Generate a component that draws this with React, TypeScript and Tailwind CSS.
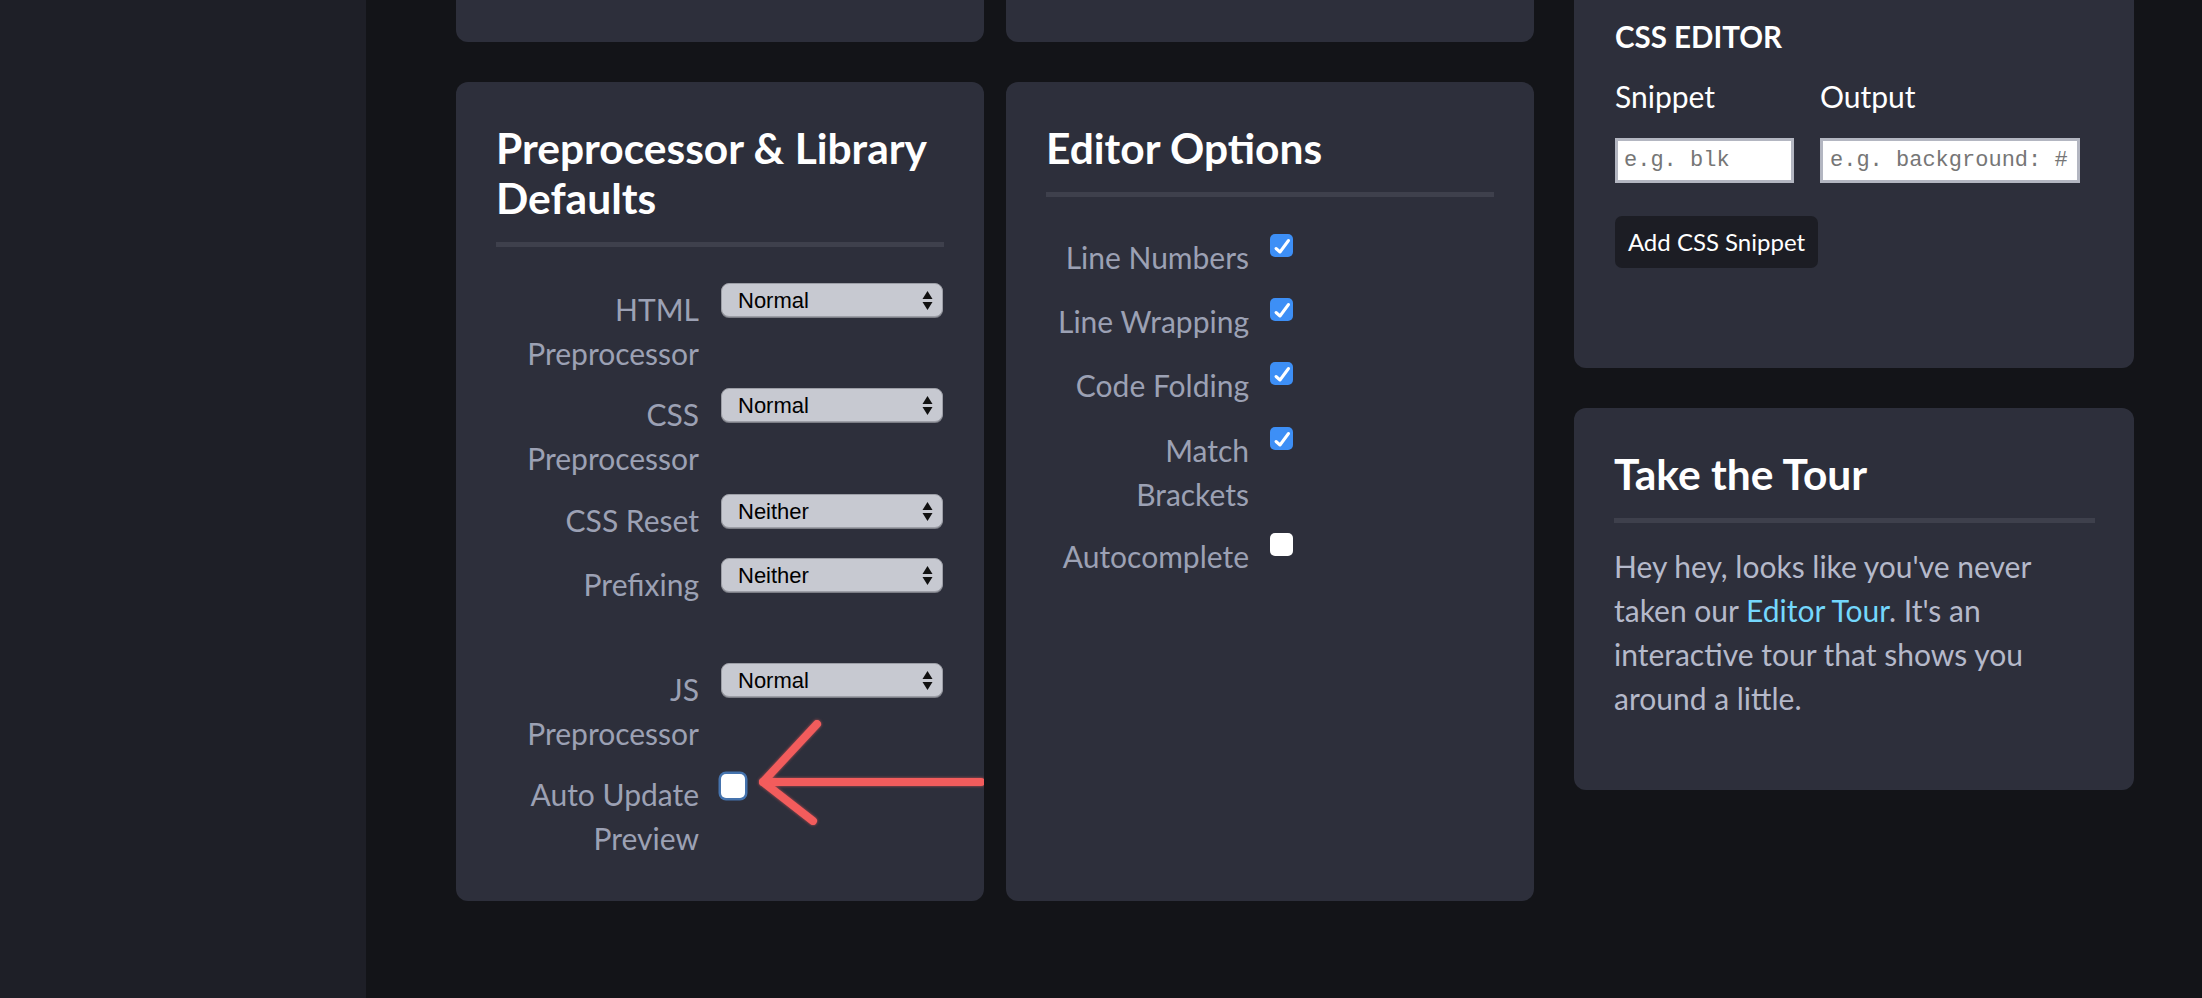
import React from 'react';

const lato = "font-['Lato',_'Noto_Sans',_sans-serif]";

function Select({ value }: { value: string }) {
  return (
    <div className="relative -mt-[4px] w-[222px] h-[34px] shrink-0 rounded-[8px] bg-[#c7c9d1] border-[1.5px] border-[#9c9ea6] shadow-[0_1px_0_#7c7e86] flex items-center pl-[16px] font-['Liberation_Sans',_sans-serif] text-[22px] text-black">
      {value}
      <svg className="absolute right-[9px] top-[7px]" width="11" height="19" viewBox="0 0 11 19">
        <path d="M5.5 0 L10.5 8 L0.5 8 Z" fill="#111" />
        <path d="M5.5 19 L10.5 11 L0.5 11 Z" fill="#111" />
      </svg>
    </div>
  );
}

function Check({ on }: { on: boolean }) {
  if (!on) {
    return <div className="-mt-[1px] w-[23px] h-[23px] shrink-0 rounded-[5px] bg-white" />;
  }
  return (
    <div className="-mt-[1px] w-[23px] h-[23px] shrink-0 rounded-[5px] bg-[#3d8ff6] flex items-center justify-center">
      <svg width="23" height="23" viewBox="0 0 23 23">
        <path d="M6 14.5 L10 18 L18.5 6.5" fill="none" stroke="#fff" strokeWidth="3" strokeLinecap="round" strokeLinejoin="round" />
      </svg>
    </div>
  );
}

function Label({ children }: { children: React.ReactNode }) {
  return (
    <div className="w-[203px] shrink-0 text-right whitespace-nowrap text-[30px] leading-[44px] text-[#9ca1b4]">
      {children}
    </div>
  );
}

const Divider = () => <div className="h-[5px] bg-[#3e404c]" />;

export default function App() {
  return (
    <div className={`flex w-[2202px] h-[998px] overflow-hidden bg-[#131418] ${lato}`}>
      <aside className="w-[366px] shrink-0 bg-[#1e1f27]" />

      <main className="flex items-start gap-[40px] pl-[90px]">
        {/* left two columns */}
        <div className="flex flex-col gap-[40px] w-[1078px]">
          <div className="flex gap-[22px]">
            <div className="w-[528px] h-[42px] rounded-b-[12px] bg-[#2d2f3b]" />
            <div className="w-[528px] h-[42px] rounded-b-[12px] bg-[#2d2f3b]" />
          </div>

          <div className="flex gap-[22px]">
            {/* Preprocessor card */}
            <section className="relative w-[528px] rounded-[12px] bg-[#2d2f3b] px-[40px] pt-[41px] pb-[41px]">
              <h2 className="text-[42.5px] leading-[50px] font-bold text-white">
                Preprocessor &amp; Library
                <br />
                Defaults
              </h2>
              <div className="mt-[19px]">
                <Divider />
              </div>

              <div className="mt-[40px] flex flex-col">
                <div className="flex items-start gap-[22px]">
                  <Label>
                    HTML
                    <br />
                    Preprocessor
                  </Label>
                  <Select value="Normal" />
                </div>
                <div className="mt-[17px] flex items-start gap-[22px]">
                  <Label>
                    CSS
                    <br />
                    Preprocessor
                  </Label>
                  <Select value="Normal" />
                </div>
                <div className="mt-[18px] flex items-start gap-[22px]">
                  <Label>CSS Reset</Label>
                  <Select value="Neither" />
                </div>
                <div className="mt-[20px] flex items-start gap-[22px]">
                  <Label>Prefixing</Label>
                  <Select value="Neither" />
                </div>
                <div className="mt-[61px] flex items-start gap-[22px]">
                  <Label>
                    JS
                    <br />
                    Preprocessor
                  </Label>
                  <Select value="Normal" />
                </div>
                <div className="mt-[17px] flex items-start gap-[22px]">
                  <Label>
                    Auto Update
                    <br />
                    Preview
                  </Label>
                  <div className="mt-[2px] w-[24px] h-[24px] shrink-0 rounded-[5px] bg-white ring-[2.5px] ring-[#4573ad]" />
                </div>
              </div>

              {/* annotation arrow */}
              <svg className="absolute left-0 top-0 pointer-events-none" width="528" height="817" viewBox="0 0 528 817">
                <g fill="none" stroke="#f25c5c" strokeWidth="8" strokeLinecap="round" strokeLinejoin="round" style={{ filter: 'drop-shadow(0 0 1.5px rgba(242,92,92,0.7))' }}>
                  <path d="M307 700 L525 700" />
                  <path d="M361 642 L307 700 L357 739" />
                </g>
              </svg>
            </section>

            {/* Editor options card */}
            <section className="w-[528px] rounded-[12px] bg-[#2d2f3b] px-[40px] pt-[41px] pb-[41px]">
              <h2 className="text-[42.5px] leading-[50px] font-bold text-white">Editor Options</h2>
              <div className="mt-[19px]">
                <Divider />
              </div>

              <div className="mt-[38px] flex flex-col">
                <div className="flex items-start gap-[21px]">
                  <Label>Line Numbers</Label>
                  <Check on />
                </div>
                <div className="mt-[20px] flex items-start gap-[21px]">
                  <Label>Line Wrapping</Label>
                  <Check on />
                </div>
                <div className="mt-[20px] flex items-start gap-[21px]">
                  <Label>Code Folding</Label>
                  <Check on />
                </div>
                <div className="mt-[21px] flex items-start gap-[21px]">
                  <Label>
                    Match
                    <br />
                    Brackets
                  </Label>
                  <Check on />
                </div>
                <div className="mt-[18px] flex items-start gap-[21px]">
                  <Label>Autocomplete</Label>
                  <Check on={false} />
                </div>
              </div>
            </section>
          </div>
        </div>

        {/* right column */}
        <div className="flex flex-col gap-[40px] w-[560px]">
          <section className="h-[368px] rounded-b-[12px] bg-[#2d2f3b] pl-[41px] pr-[40px] pt-[19px]">
            <h3 className="text-[29.5px] leading-[35px] font-bold text-white">CSS EDITOR</h3>
            <div className="mt-[24px] flex gap-[26px]">
              <div className="flex flex-col">
                <span className="text-[30px] leading-[36px] text-white">Snippet</span>
                <input
                  readOnly
                  placeholder="e.g. blk"
                  className="mt-[24px] w-[179px] h-[45px] border-[3px] border-[#b3b6c1] bg-white px-[6px] font-['Liberation_Mono',_monospace] text-[22px] text-[#333] placeholder:text-[#767676] outline-none"
                />
              </div>
              <div className="flex flex-col">
                <span className="text-[30px] leading-[36px] text-white">Output</span>
                <input
                  readOnly
                  placeholder="e.g. background: #"
                  className="mt-[24px] w-[260px] h-[45px] border-[3px] border-[#b3b6c1] bg-white px-[7px] font-['Liberation_Mono',_monospace] text-[22px] text-[#333] placeholder:text-[#767676] outline-none"
                />
              </div>
            </div>
            <button className="mt-[33px] h-[52px] w-[203px] rounded-[7px] bg-[#1c1d24] text-[24px] text-white">
              Add CSS Snippet
            </button>
          </section>

          <section className="rounded-[12px] bg-[#2d2f3b] pl-[40px] pr-[39px] pt-[41px] pb-[70px]">
            <h2 className="text-[42.5px] leading-[50px] font-bold text-white">Take the Tour</h2>
            <div className="mt-[19px]">
              <Divider />
            </div>
            <p className="mt-[21px] w-[425px] text-[30px] leading-[44px] text-[#b5b9ca]">
              Hey hey, looks like you've never taken our <span className="text-[#74d7fc]">Editor Tour</span>. It's an interactive tour that shows you around a little.
            </p>
          </section>
        </div>
      </main>
    </div>
  );
}
